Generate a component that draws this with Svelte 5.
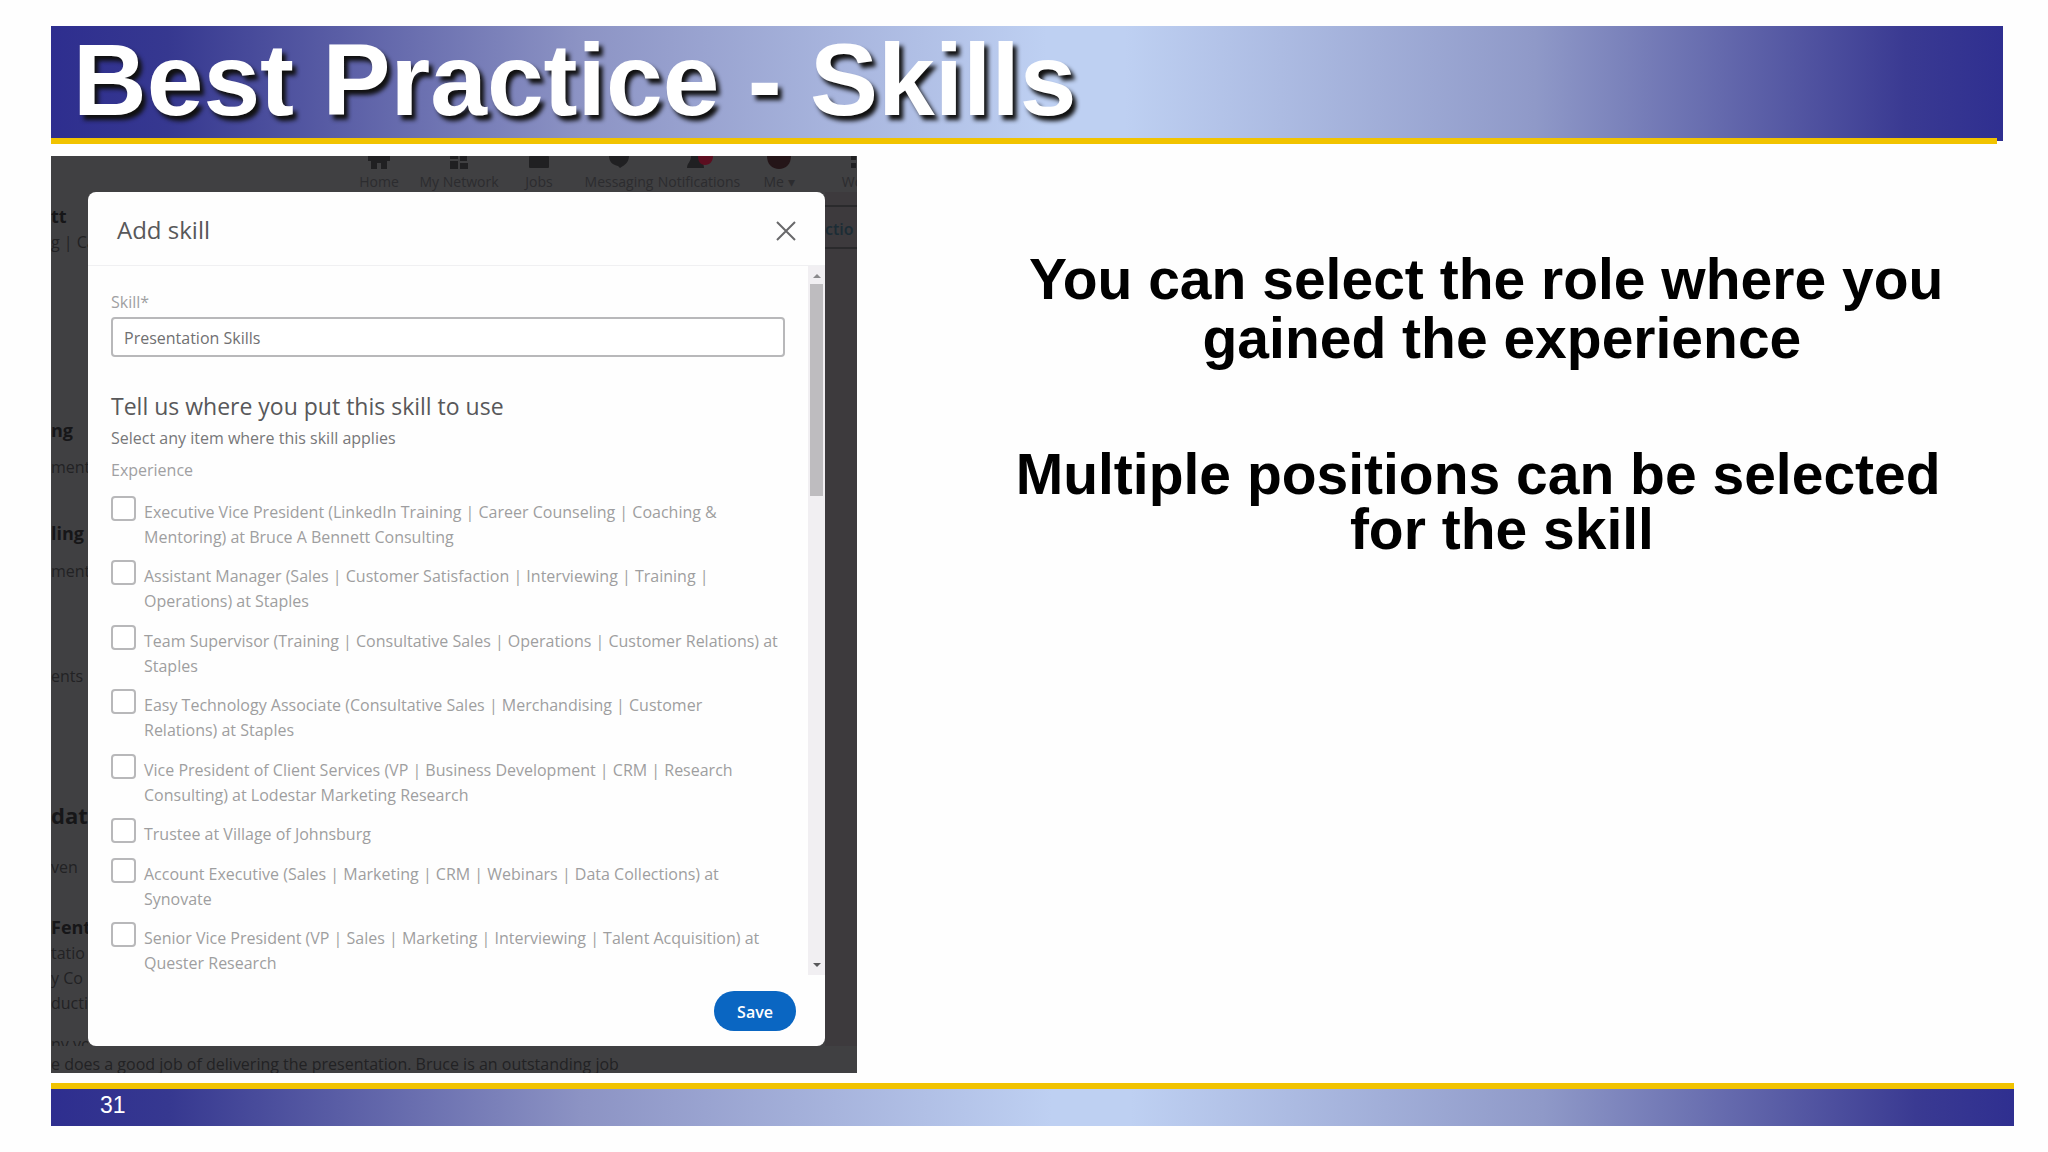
<script lang="ts">
	type Role = { id: string; lines: string[] };
	type Fragment = { text: string; gap: number; strong?: boolean; large?: boolean };

	let skill = $state('Presentation Skills');
	let selected = $state<string[]>([]);

	const roles: Role[] = [
		{
			id: 'evp',
			lines: [
				'Executive Vice President (LinkedIn Training | Career Counseling | Coaching &',
				'Mentoring) at Bruce A Bennett Consulting'
			]
		},
		{
			id: 'assistant',
			lines: [
				'Assistant Manager (Sales | Customer Satisfaction | Interviewing | Training |',
				'Operations) at Staples'
			]
		},
		{
			id: 'supervisor',
			lines: [
				'Team Supervisor (Training | Consultative Sales | Operations | Customer Relations) at',
				'Staples'
			]
		},
		{
			id: 'easytech',
			lines: [
				'Easy Technology Associate (Consultative Sales | Merchandising | Customer',
				'Relations) at Staples'
			]
		},
		{
			id: 'client',
			lines: [
				'Vice President of Client Services (VP | Business Development | CRM | Research',
				'Consulting) at Lodestar Marketing Research'
			]
		},
		{ id: 'trustee', lines: ['Trustee at Village of Johnsburg'] },
		{
			id: 'account',
			lines: [
				'Account Executive (Sales | Marketing | CRM | Webinars | Data Collections) at',
				'Synovate'
			]
		},
		{
			id: 'svp',
			lines: [
				'Senior Vice President (VP | Sales | Marketing | Interviewing | Talent Acquisition) at',
				'Quester Research'
			]
		}
	];

	// what shows of the profile page to the left of the dialog
	const fragments: Fragment[] = [
		{ text: 'tt', gap: 14, strong: true },
		{ text: 'g | Ca', gap: 6 },
		{ text: 'ng', gap: 168, strong: true },
		{ text: 'ment', gap: 17 },
		{ text: 'ling', gap: 46, strong: true },
		{ text: 'ment,', gap: 18 },
		{ text: 'ents', gap: 85 },
		{ text: 'dat', gap: 119, strong: true, large: true },
		{ text: 'ven', gap: 32 },
		{ text: 'Fente', gap: 40, strong: true },
		{ text: 'tatio', gap: 6 },
		{ text: 'y Co', gap: 5 },
		{ text: 'ducti', gap: 5 },
		{ text: 'ny yo', gap: 21 }
	];

	const nav = ['Home', 'My Network', 'Jobs', 'Messaging', 'Notifications', 'Me', 'Work'];
</script>

<main class="slide">
	<header class="banner">
		<h1>Best Practice - Skills</h1>
		<div class="rule"></div>
	</header>

	<div class="content">
		<section class="shot">
			<nav class="navbar" aria-label="Site">
				{#each nav as item, i}
					<div class="nav-item">
						<svg viewBox="0 0 28 16" width="28" height="16" aria-hidden="true">
							{#if i === 0}
								<path d="M3 0h22v5h-3v8h-6V7h-4v6H6V5H3z" />
							{:else if i === 1}
								<path d="M5 0h8v3H5zM15 0h7v5h-7zM5 5h8v8H5zM15 7h8v6h-8z" />
							{:else if i === 2}
								<rect x="4" width="20" height="12" rx="1" />
							{:else if i === 3}
								<path d="M4 0h20c0 6-4 9-9 12l-2-2C8 9 4 6 4 0z" />
							{:else if i === 4}
								<path d="M2 12c0-5 4-6 4-12h10c0 6 3 7 3 12z" />
								<path class="alert" d="M13 0h15c0 5-3 9-8 9s-7-4-7-9z" />
							{:else if i === 5}
								<path class="avatar" d="M2 0h24c0 8-5 13-12 13S2 8 2 0z" />
							{:else}
								<path d="M6 0h5v4H6zM14 0h5v4h-5zM6 7h5v5H6zM14 7h5v5h-5z" />
							{/if}
						</svg>
						<span>{item}{i === 5 ? ' ▾' : ''}</span>
					</div>
				{/each}
			</nav>

			<div class="gutter" aria-hidden="true">
				{#each fragments as f}
					<p class:strong={f.strong} class:large={f.large} style:margin-top="{f.gap}px">{f.text}</p>
				{/each}
			</div>

			<div class="dialog" role="dialog" aria-labelledby="dialog-title">
				<div class="dialog-head">
					<h2 id="dialog-title">Add skill</h2>
					<button class="close" type="button" aria-label="Close">
						<svg viewBox="0 0 20 20" width="20" height="20">
							<path d="M1 1l18 18M19 1L1 19" />
						</svg>
					</button>
				</div>

				<div class="dialog-body">
					<form id="skill-form" class="form" onsubmit={(e) => e.preventDefault()}>
						<label class="field-label" for="skill">Skill*</label>
						<input id="skill" class="field" type="text" bind:value={skill} />

						<h3>Tell us where you put this skill to use</h3>
						<p class="hint">Select any item where this skill applies</p>

						<fieldset>
							<legend>Experience</legend>
							<div class="roles">
								{#each roles as role}
									<div class="role">
										<input id={role.id} type="checkbox" value={role.id} bind:group={selected} />
										<label for={role.id}>
											{#each role.lines as line}
												<span>{line}</span>
											{/each}
										</label>
									</div>
								{/each}
							</div>
						</fieldset>
					</form>

					<div class="scrollbar" aria-hidden="true">
						<svg viewBox="0 0 8 4" width="8" height="4"><path d="M0 4l4-4 4 4z" /></svg>
						<div class="thumb"></div>
						<svg class="down" viewBox="0 0 8 4" width="8" height="4"><path d="M0 0l4 4 4-4z" /></svg>
					</div>
				</div>

				<div class="dialog-foot">
					<button class="save" type="submit" form="skill-form">Save</button>
				</div>
			</div>

			<div class="gutter right" aria-hidden="true">
				<p>ctio</p>
			</div>

			<p class="below" aria-hidden="true">
				e does a good job of delivering the presentation. Bruce is an outstanding job
			</p>
		</section>

		<section class="points">
			<p>
				<span>{'You can select the role where you '}</span>
				<span>{' gained the experience'}</span>
			</p>
			<p class="tight">
				<span>{'Multiple positions can be selected  '}</span>
				<span>{' for the skill'}</span>
			</p>
		</section>
	</div>

	<footer class="footer">31</footer>
</main>

<style>
	:global(body) {
		margin: 0;
		background: #fefefe;
	}

	.slide {
		--bar: linear-gradient(
			90deg,
			#2e2e8f 0%,
			#363890 6%,
			#8c93c4 27%,
			#bed0f2 51%,
			#bed0f2 55%,
			#8f99c8 76%,
			#3a3a92 95%,
			#2f2f90 100%
		);
		--gold: #f1c300;
		padding: 26px 34px 26px 51px;
		font-family: 'Liberation Sans', Arial, sans-serif;
	}

	h1,
	h2,
	h3,
	p {
		margin: 0;
	}

	.banner {
		height: 115px;
		margin-right: 11px;
		display: flex;
		flex-direction: column;
		background: var(--bar);
	}

	h1 {
		flex: 1;
		padding-left: 22px;
		font-size: 102px;
		line-height: 108px;
		color: #fff;
		text-shadow: 4px 5px 4px #111;
		white-space: nowrap;
	}

	.rule {
		height: 6px;
		margin: 0 6px -3px 0;
		background: var(--gold);
	}

	.content {
		margin-top: 15px;
		display: grid;
		grid-template-columns: minmax(0, 806fr) minmax(0, 1157fr);
	}

	.shot {
		display: grid;
		grid-template-columns: 37px minmax(0, 1fr) 32px;
		grid-template-rows: 36px auto 27px;
		background: #404042;
		color: #222224;
		font-family: 'Open Sans', 'Noto Sans', sans-serif;
		font-size: 16px;
		overflow: hidden;
	}

	.navbar {
		grid-column: 1 / -1;
		display: grid;
		grid-template-columns: repeat(7, 80px);
		justify-content: end;
		margin-right: -42px;
		font-size: 14px;
		line-height: 16px;
		color: #2c2c2f;
	}

	.nav-item {
		display: flex;
		flex-direction: column;
		align-items: center;
		gap: 2px;
		white-space: nowrap;
	}

	.nav-item svg {
		fill: #202022;
	}

	.nav-item .alert {
		fill: #5c0e20;
	}

	.nav-item .avatar {
		fill: #241518;
	}

	/* the side strips never make the dialog row taller */
	.gutter {
		contain: size;
		overflow: hidden;
		white-space: nowrap;
		line-height: 20px;
	}

	.gutter .strong {
		font-size: 18px;
		font-weight: 700;
		color: #161618;
	}

	.gutter .large {
		font-size: 22px;
	}

	.gutter.right {
		padding-top: 13px;
		background: #3d3a3d;
	}

	.gutter.right p {
		padding: 12px 0 8px;
		border: solid #2a2a2c;
		border-width: 2px 0;
		color: #1b2c35;
		font-weight: 600;
	}

	.below {
		grid-column: 1 / -1;
		padding-top: 6px;
		line-height: 24px;
		white-space: nowrap;
	}

	.dialog {
		display: flex;
		flex-direction: column;
		background: #fefefe;
		border-radius: 8px;
		overflow: hidden;
	}

	.dialog-head {
		height: 73px;
		padding: 0 29px;
		display: flex;
		align-items: center;
		justify-content: space-between;
		border-bottom: 1px solid #f0f0f2;
	}

	h2,
	h3 {
		line-height: 32px;
		font-weight: 400;
		color: #58585a;
	}

	h2 {
		padding-top: 3px;
		font-size: 24px;
	}

	h3 {
		margin-top: 33px;
		font-size: 23px;
	}

	.close {
		padding: 4px 0 0;
		border: 0;
		background: none;
		display: flex;
	}

	.close svg {
		fill: none;
		stroke: #68686a;
		stroke-width: 2;
	}

	.dialog-body {
		height: 709px;
		display: flex;
	}

	.form {
		flex: 1;
		padding: 24px 23px 0;
		display: flex;
		flex-direction: column;
	}

	.field-label,
	legend {
		line-height: 24px;
		color: #a0a0a2;
	}

	.field {
		box-sizing: border-box;
		height: 40px;
		margin-top: 3px;
		padding: 2px 11px 0;
		border: 2px solid #b8b8ba;
		border-radius: 4px;
		background: #fff;
		font: inherit;
		color: #707072;
	}

	.hint {
		line-height: 32px;
		color: #777779;
	}

	fieldset {
		margin: 0;
		padding: 0;
		border: 0;
		min-width: 0;
	}

	legend {
		padding: 4px 0;
	}

	.roles {
		height: 476px;
		margin-top: 10px;
		display: flex;
		flex-direction: column;
		justify-content: space-between;
	}

	.role {
		display: flex;
		gap: 8px;
	}

	.role input {
		flex: none;
		appearance: none;
		width: 25px;
		height: 25px;
		margin: 0;
		border: 2px solid #b8b8ba;
		border-radius: 4px;
		background: #fff;
	}

	.role input:checked {
		background: #0a66c2;
	}

	.role label {
		padding-top: 4px;
		margin-bottom: -4px;
		line-height: 25px;
		color: #9e9ea0;
		white-space: nowrap;
	}

	.role label span {
		display: block;
	}

	.scrollbar {
		width: 17px;
		padding: 8px 2px;
		box-sizing: border-box;
		display: flex;
		flex-direction: column;
		align-items: center;
		gap: 6px;
		background: #f1eff2;
	}

	.scrollbar svg {
		fill: #8a8a8c;
	}

	.scrollbar .down {
		margin-top: auto;
		fill: #58585a;
	}

	.thumb {
		width: 13px;
		height: 212px;
		background: #bebcbf;
	}

	.dialog-foot {
		height: 71px;
		padding: 0 29px;
		display: flex;
		align-items: center;
		justify-content: flex-end;
	}

	.save {
		width: 82px;
		height: 40px;
		padding: 2px 0 0;
		border: 0;
		border-radius: 20px;
		background: #0a66c2;
		color: #fff;
		font: inherit;
		font-weight: 600;
	}

	.points {
		padding: 94px 0 0 117px;
		text-align: center;
		font-size: 57px;
		line-height: 59px;
		font-weight: 700;
		color: #000;
	}

	.points span {
		display: block;
		white-space: pre;
	}

	.points .tight {
		margin-top: 79px;
		line-height: 55px;
	}

	.footer {
		height: 37px;
		margin-top: 10px;
		padding-left: 49px;
		border-top: 6px solid var(--gold);
		background: var(--bar) border-box;
		font-size: 23px;
		line-height: 33px;
		color: #fff;
	}
</style>
